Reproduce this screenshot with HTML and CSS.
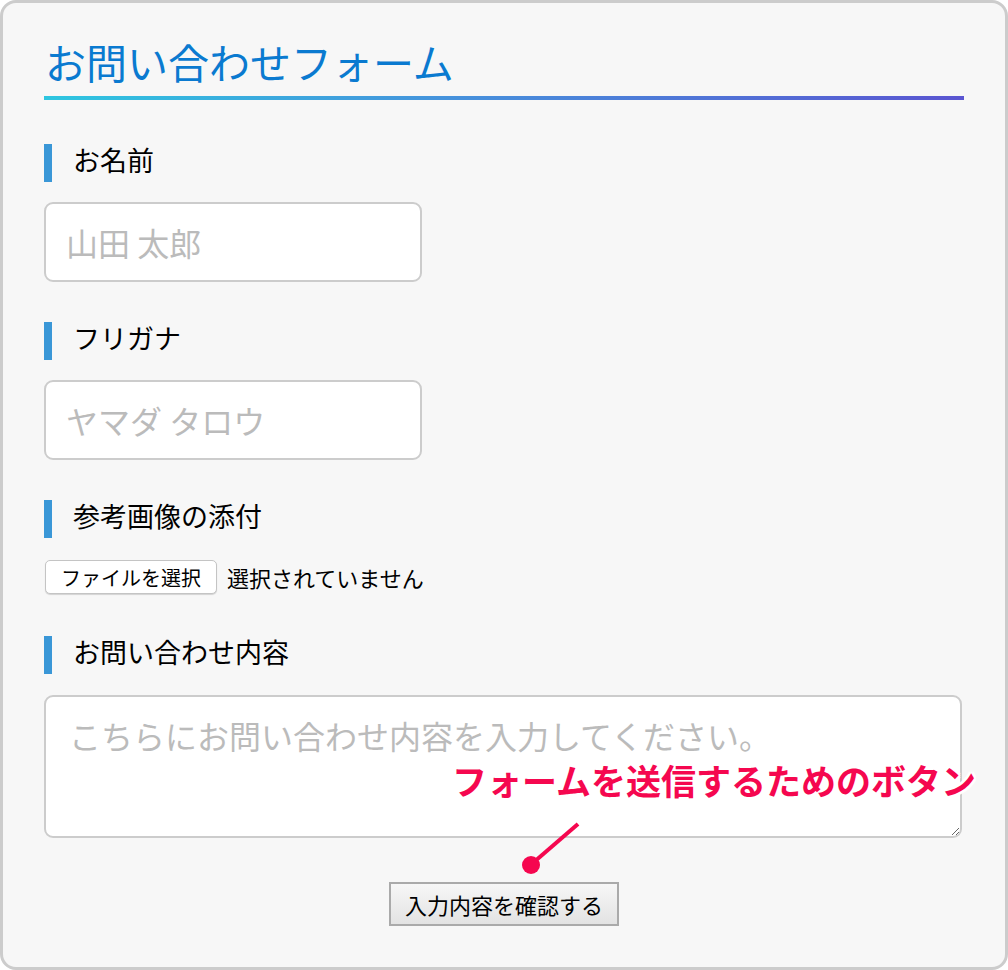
FILE: index.html
```html
<!DOCTYPE html>
<html lang="ja">
<head>
<meta charset="utf-8">
<title>お問い合わせフォーム</title>
<link rel="stylesheet" href="styles.css">
</head>
<body>
<div class="card">
  <h1 class="title">お問い合わせフォーム</h1>
  <form class="form">
    <div class="field">
      <div class="label">お名前</div>
      <input class="text-input" type="text" placeholder="山田 太郎">
    </div>
    <div class="field">
      <div class="label">フリガナ</div>
      <input class="text-input" type="text" placeholder="ヤマダ タロウ">
    </div>
    <div class="field field-file">
      <div class="label">参考画像の添付</div>
      <div class="file-row">
        <span class="file-btn">ファイルを選択</span>
        <span class="file-name">選択されていません</span>
      </div>
    </div>
    <div class="field field-last">
      <div class="label">お問い合わせ内容</div>
      <textarea class="textarea" placeholder="こちらにお問い合わせ内容を入力してください。"></textarea>
    </div>
    <div class="actions">
      <button class="submit" type="button">入力内容を確認する</button>
    </div>
  </form>
  <div class="note">
    <span class="note-text">フォームを送信するためのボタン</span>
    <svg class="note-pointer" width="70" height="60" viewBox="0 0 70 60">
      <line x1="60" y1="8" x2="16" y2="46" stroke="#f5074f" stroke-width="4" stroke-linecap="butt"/>
      <circle cx="13" cy="49" r="9" fill="#f5074f"/>
    </svg>
  </div>
</div>
</body>
</html>
```

FILE: styles.css
```css
* { box-sizing: border-box; }
html, body { margin: 0; padding: 0; }
body {
  width: 1008px;
  height: 970px;
  font-family: "Noto Sans CJK JP", "Noto Sans", sans-serif;
  color: #000;
}
.card {
  position: relative;
  width: 1008px;
  height: 970px;
  border: 3px solid #cccccc;
  border-radius: 16px;
  background: #f7f7f7;
  padding: 34px 41px 0 41px;
}
.title {
  margin: 0 0 44px 0;
  font-size: 41px;
  line-height: 48px;
  font-weight: 400;
  color: #0a7ad0;
  padding: 0 0 15px 1px;
  background: linear-gradient(90deg, #2ec6e0 0%, #4691dc 45%, #5a55d1 100%) left bottom / 100% 4px no-repeat;
}
.form { display: flex; flex-direction: column; }
.field { display: flex; flex-direction: column; gap: 20px; margin-bottom: 40px; }
.field-file { gap: 22px; margin-bottom: 42px; }
.field-last { margin-bottom: 0; }
.label {
  height: 38px;
  border-left: 8px solid #3a97d7;
  padding: 0 0 6px 21px;
  font-size: 27px;
  line-height: 32px;
}
.text-input {
  width: 378px;
  height: 80px;
  border: 2px solid #cccccc;
  border-radius: 9px;
  background: #fff;
  padding: 0 20px;
  font-family: "Noto Sans CJK JP", sans-serif;
  font-size: 32px;
  color: #333;
  outline: none;
}
.text-input::placeholder, .textarea::placeholder { color: #bbbbbb; }
.file-row { display: flex; align-items: center; gap: 10px; height: 34px; }
.file-btn {
  display: inline-flex;
  align-items: center;
  justify-content: center;
  width: 172px;
  height: 34px;
  margin-left: 1px;
  background: #fff;
  border: 1px solid #c4c4c4;
  border-radius: 5px;
  box-shadow: 0 1px 1px rgba(0,0,0,0.15);
  font-size: 20px;
}
.file-name { font-size: 22px; }
.textarea {
  display: block;
  width: 918px;
  height: 143px;
  margin-top: 1px;
  border: 2px solid #cccccc;
  border-radius: 9px;
  background: #fff;
  padding: 18px 23px;
  font-family: "Noto Sans CJK JP", sans-serif;
  font-size: 32px;
  line-height: 40px;
  color: #333;
  outline: none;
}
.actions { display: flex; justify-content: center; margin-top: 44px; }
.submit {
  width: 230px;
  height: 44px;
  padding: 0;
  border: 2px solid #aaaaaa;
  border-radius: 0;
  background: linear-gradient(#f7f7f7, #e3e3e3);
  font-family: "Noto Sans CJK JP", sans-serif;
  font-size: 22px;
  color: #000;
}
.note {
  position: absolute;
  left: 449px;
  top: 752px;
  width: 540px;
  height: 120px;
}
.note-text {
  position: absolute;
  left: 0;
  top: 0;
  font-size: 35px;
  line-height: 50px;
  font-weight: 700;
  color: #f5074f;
  white-space: nowrap;
  text-shadow: 2px 0 0 #fff, -2px 0 0 #fff, 0 2px 0 #fff, 0 -2px 0 #fff, 2px 2px 0 #fff, -2px -2px 0 #fff, 2px -2px 0 #fff, -2px 2px 0 #fff;
}
.note-pointer {
  position: absolute;
  left: 66px;
  top: 61px;
}
```
